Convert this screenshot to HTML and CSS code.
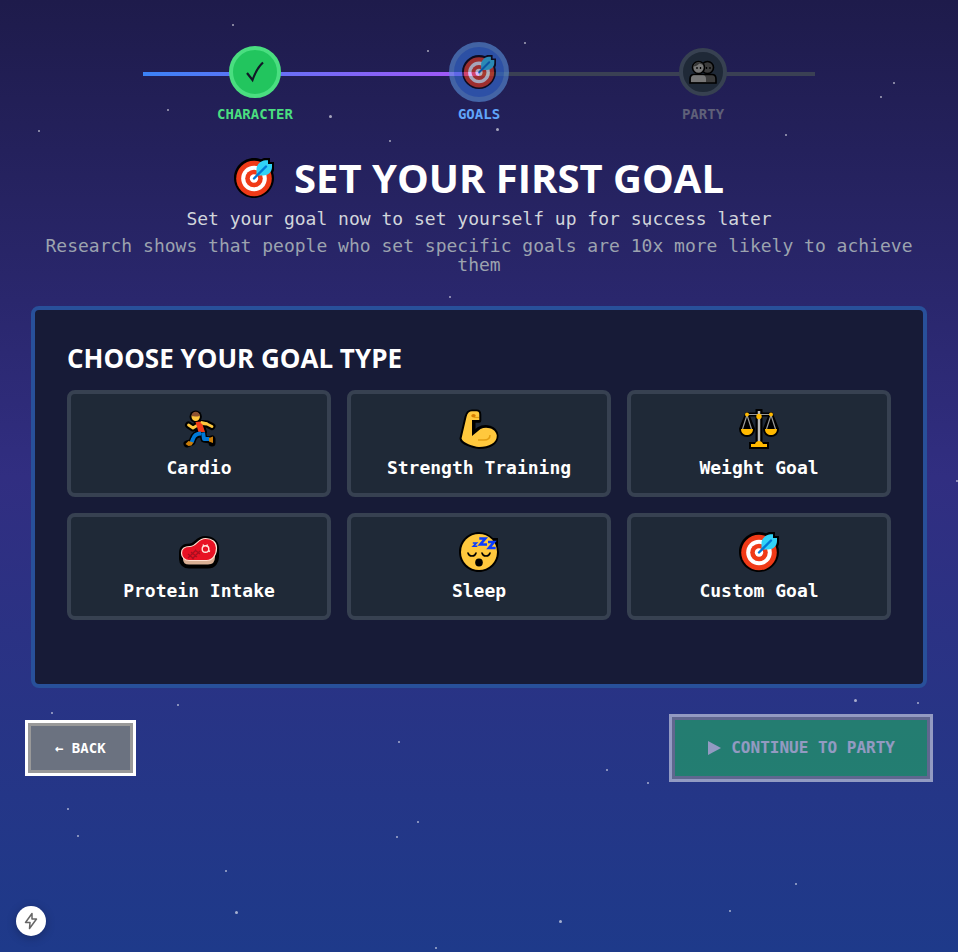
FILE: index.html
```html
<!DOCTYPE html>
<html lang="en">
<head>
<meta charset="utf-8">
<meta name="viewport" content="width=device-width, initial-scale=1">
<title>Set Your First Goal</title>
<link rel="stylesheet" href="styles.css">
</head>
<body>
<svg class="defs" width="0" height="0" aria-hidden="true">
  <symbol id="target" viewBox="0 0 40 40">
    <path d="M20 0C9 0 0 9 0 20s9 20 20 20 20-9 20-20c0-2-.3-4-.9-5.600L40 12V4h-4V0h-6l-3 1.200C25 .4 22.500 0 20 0Z" fill="#000"/>
    <circle cx="20" cy="20.500" r="17.800" fill="#f03a17"/>
    <circle cx="20" cy="20.500" r="12.800" fill="#fff"/>
    <circle cx="20" cy="20.500" r="8.800" fill="#f03a17"/>
    <circle cx="20" cy="20.500" r="4.200" fill="#fff"/>
    <path d="M22.500 17.500V11c0-4 4-8.500 9-8.800H34V6h4v3c0 5-4 8.500-9 8.500Z" fill="#31d2f7"/>
    <path d="m20 20.500 12-12" stroke="#0078d7" stroke-width="2.400" stroke-linecap="round"/>
  </symbol>
  <symbol id="runner" viewBox="0 0 40 40">
    <g fill="#000" stroke="#000" stroke-linecap="round" stroke-linejoin="round">
      <circle cx="16.700" cy="7.700" r="6.200" stroke="none"/>
      <path d="m9.500 16 4.500 3 4-2.500 5-2 5 .5 5 2.500" fill="none" stroke-width="7"/>
      <path d="m17 13 6 1 3 9-4 3-4-2Z" stroke-width="4"/>
      <path d="M21 25c-4 0-6 2-7 5l-1 3-5 2M24 25l1 5 6 1 2-1v4" fill="none" stroke-width="7"/>
    </g>
    <path d="m9.500 16 4.500 3 4-2.500M23 14.500l5 .5 5 2.500" fill="none" stroke="#ffc83d" stroke-width="2.800" stroke-linecap="round" stroke-linejoin="round"/>
    <path d="m16.500 13 6-.5 3.500 10.500h-6.500Z" fill="#f03a17"/>
    <path d="M23 13.500l4.500 1" stroke="#ffc83d" stroke-width="2.800" stroke-linecap="round"/>
    <circle cx="16.700" cy="7.700" r="4.200" fill="#ffc83d"/>
    <path d="M12.500 7a4.200 4.200 0 0 1 8.400 0c-1 .6-6 .6-8.400 0Z" fill="#8d5230"/>
    <path d="M22 24.500c-5 0-7 2-8 5.500l-1.500 3.500M24 23.500l1 6.500h5.500" fill="none" stroke="#0078d7" stroke-width="4" stroke-linejoin="round"/>
    <path d="m6.500 35 3-3 5 1.500-2 3-3 .5ZM30 29l4-1.500V34l-4-1.500Z" fill="#ca7d0a"/>
  </symbol>
  <symbol id="muscle" viewBox="0 0 40 40">
    <path d="M2.500 29.500 7.500 8C8.500 4 10.500 2.500 13 2.500h4.500c2 0 2.800 1.200 2.800 3v6.200H14.500V24l5-4c7-4 17-1.500 18 6.500C38 34 30 38 20 38 14 37.500 3 34 2.500 29.500Z" fill="#000" stroke="#000" stroke-width="4" stroke-linejoin="round"/>
    <path d="M2.500 29.500 7.500 8C8.500 4 10.500 2.300 13 2.300h4.500c2 0 2.800 1.200 2.800 3v5.700H13V27l8.500-7c6-3 15.500-.5 16.300 6.500C38 34 30 38 20 38 14 37.500 4 34 2.500 29.500Z" fill="#ffc83d"/>
    <path d="M19 31h6c4 0 6-2 6-5" fill="none" stroke="#e39d10" stroke-width="1.500"/>
    <ellipse cx="14.500" cy="6.700" rx="2.200" ry="1.800" fill="#d67d00"/>
    <path d="M15 8.500h5" stroke="#e39d10" stroke-width="1.200"/>
  </symbol>
  <symbol id="scales" viewBox="0 0 40 40">
    <g fill="#000" stroke="#000" stroke-width="4" stroke-linejoin="round">
      <path d="M8 5 2 20c0 4 3 6 6 6s6-2 6-6ZM32 5l-6 15c0 4 3 6 6 6s6-2 6-6Z"/>
      <path d="M8 5.500h24"/>
    </g>
    <path d="M16.500 0h7v33h6.500v7H10v-7h6.500Z" fill="#000"/>
    <path d="m8 6-4.500 14M8 6l4.500 14M32 6l-4.500 14M32 6l4.500 14M8 5.500h24" fill="none" stroke="#999" stroke-width="1.200"/>
    <path d="M20 2v32" stroke="#bbb" stroke-width="2.500"/>
    <path d="M2 20h12c0 4-3 6-6 6s-6-2-6-6ZM26 20h12c0 4-3 6-6 6s-6-2-6-6ZM12 35h4c1-4 7-4 8 0h4v3H12Z" fill="#ffb900"/>
    <circle cx="20" cy="7.500" r="2.700" fill="#ffb900"/>
    <circle cx="8" cy="5.500" r="2" fill="#ffb900"/>
    <circle cx="32" cy="5.500" r="2" fill="#ffb900"/>
  </symbol>
  <symbol id="meat" viewBox="0 0 40 40">
    <path d="M2 21c0-5 3-7.500 9-7.500 5 0 7-7.500 15-7.500 7 0 12 4 12 10v9c0 5-3 9.500-9 9.500H10c-5 0-8-3.500-8-7.500Z" fill="#d9af94" stroke="#000" stroke-width="4" stroke-linejoin="round"/>
    <path d="M2.500 21c0-4 3-6.500 8.500-6.500 6 0 8-8 15.500-8 6.500 0 11 3.500 11 9.500 0 7-4 12.500-10 12.500H10c-4 0-7.500-3-7.500-7.500Z" fill="#e81224" stroke="#ffe0d0" stroke-width="1.200"/>
    <path d="m9 22 6 5M12 20l6 5M16 18l5 4M9 26l8-8M13 27l8-8" stroke="#a80f20" stroke-width="1.200"/>
    <circle cx="26.500" cy="17" r="3.300" fill="none" stroke="#ffe4dc" stroke-width="1.400"/>
    <path d="m24 12.500 1 2M29 18.500l2 1M28.500 12.500l-1 2" stroke="#ffe4dc" stroke-width="1.400"/>
  </symbol>
  <symbol id="sleep" viewBox="0 0 40 40">
    <path d="M20 0C9 0 0 9 0 20s9 20 20 20 20-9 20-20l-1-5V6h-5C30 2 25 0 20 0Z" fill="#000"/>
    <circle cx="20" cy="20" r="18" fill="#ffc83d"/>
    <path d="M9 21c1 4 7 4 8 0M23 21c1 4 7 4 8 0" fill="none" stroke="#000" stroke-width="1.600" stroke-linecap="round"/>
    <ellipse cx="20" cy="30.500" rx="3.800" ry="3.900" fill="#000"/>
    <path d="M13.800 11h3.700l-3.200 3.200h4" fill="none" stroke="#0a3cff" stroke-width="1.600"/>
    <path d="M20.300 6.500h6l-5 6H28M29 10h6l-5 6h6.700" fill="none" stroke="#0a3cff" stroke-width="2.600"/>
  </symbol>
  <symbol id="people" viewBox="0 0 28 24">
    <circle cx="18.500" cy="7.500" r="6" fill="#3c3c3c" stroke="#000" stroke-width="1.600"/>
    <circle cx="9.500" cy="7.500" r="6" fill="#767676" stroke="#000" stroke-width="1.600"/>
    <path d="M4.500 6.500C5 1 13 1 14.500 5l-4-1.500c-2 2-4 3-6 3Z" fill="#383838"/>
    <path d="M1 23v-4c0-3 2-4.500 4-4.500h18c2 0 4 1.500 4 4.500v4Z" fill="#3c3c3c" stroke="#000" stroke-width="1.600"/>
    <path d="M2 22v-3c0-2.500 1.500-3.700 3-3.700h9c2 0 3 1.700 3 3.700v3Z" fill="#767676"/>
    <path d="M8 7v2M11.500 7v2M17.500 7v2M21 7v2" stroke="#000" stroke-width="1.300"/>
  </symbol>
</svg>

<svg class="stars" width="100%" height="100%" aria-hidden="true">
  <g fill="#fff" opacity=".6">
    <circle cx="233" cy="25" r="1"/><circle cx="428" cy="51" r="1"/><circle cx="525" cy="43" r="1"/>
    <circle cx="168" cy="110" r="1"/><circle cx="330.500" cy="116.500" r="1.500"/><circle cx="39" cy="131" r="1"/>
    <circle cx="390" cy="141" r="1"/><circle cx="497.500" cy="129.500" r="1.500"/><circle cx="786" cy="135" r="1"/>
    <circle cx="894" cy="83" r="1"/><circle cx="881" cy="97" r="1"/><circle cx="647" cy="226" r="1"/>
    <circle cx="450" cy="297" r="1"/><circle cx="957" cy="481" r="1"/><circle cx="52" cy="713" r="1"/>
    <circle cx="178" cy="705" r="1"/><circle cx="855.500" cy="700.500" r="1.500"/><circle cx="918" cy="703" r="1"/>
    <circle cx="399" cy="742" r="1"/><circle cx="607" cy="770" r="1"/><circle cx="648" cy="783" r="1"/>
    <circle cx="68" cy="809" r="1"/><circle cx="78" cy="836" r="1"/><circle cx="397" cy="837" r="1"/>
    <circle cx="418" cy="822" r="1"/><circle cx="226" cy="871" r="1"/><circle cx="236.500" cy="912.500" r="1.500"/>
    <circle cx="560.500" cy="921.500" r="1.500"/><circle cx="730" cy="911" r="1"/><circle cx="796" cy="884" r="1"/>
    <circle cx="436" cy="948" r="1"/>
  </g>
</svg>

<main class="page">
  <ol class="steps">
    <li class="step done">
      <span class="slot"><span class="dot"><svg width="20" height="22" viewBox="0 0 20 22" aria-hidden="true"><path d="M2 12 7.500 19C10 12 13 6 18 1.500" fill="none" stroke="#111827" stroke-width="2.200"/></svg></span></span>
      <span class="step-name">CHARACTER</span>
    </li>
    <li class="step current" aria-current="step">
      <span class="slot"><span class="dot"><svg width="34" height="34" aria-hidden="true"><use href="#target"/></svg></span></span>
      <span class="step-name">GOALS</span>
    </li>
    <li class="step todo">
      <span class="slot"><span class="dot"><svg width="28" height="24" aria-hidden="true"><use href="#people"/></svg></span></span>
      <span class="step-name">PARTY</span>
    </li>
  </ol>

  <header class="intro">
    <h1><svg class="icon" aria-hidden="true"><use href="#target"/></svg>SET YOUR FIRST GOAL</h1>
    <p class="lead">Set your goal now to set yourself up for success later</p>
    <p class="note">Research shows that people who set specific goals are 10x more likely to achieve them</p>
  </header>

  <section class="panel">
    <h2>CHOOSE YOUR GOAL TYPE</h2>
    <div class="cards">
      <button class="card" type="button"><svg class="icon" aria-hidden="true"><use href="#runner"/></svg>Cardio</button>
      <button class="card" type="button"><svg class="icon" aria-hidden="true"><use href="#muscle"/></svg>Strength Training</button>
      <button class="card" type="button"><svg class="icon" aria-hidden="true"><use href="#scales"/></svg>Weight Goal</button>
      <button class="card" type="button"><svg class="icon" aria-hidden="true"><use href="#meat"/></svg>Protein Intake</button>
      <button class="card" type="button"><svg class="icon" aria-hidden="true"><use href="#sleep"/></svg>Sleep</button>
      <button class="card" type="button"><svg class="icon" aria-hidden="true"><use href="#target"/></svg>Custom Goal</button>
    </div>
  </section>

  <nav class="actions">
    <button class="btn back" type="button">← BACK</button>
    <button class="btn next" type="button" disabled><svg width="14" height="14" viewBox="0 0 14 14" aria-hidden="true"><path d="M1 0v14l13-7Z" fill="currentColor"/></svg>CONTINUE TO PARTY</button>
  </nav>
</main>

<button class="quick" type="button" aria-label="Quick actions">
  <svg width="16" height="18" viewBox="0 0 16 18" aria-hidden="true"><path d="M9 1.500 2.500 10.500H7L6.500 16.500 13.500 7H9Z" fill="none" stroke="#666" stroke-width="1.500" stroke-linejoin="round"/></svg>
</button>
</body>
</html>
```
FILE: styles.css
```css
* {
  box-sizing: border-box;
}

body {
  margin: 0;
  min-height: 100vh;
  color: #fff;
  font-family: "DejaVu Sans Mono", monospace;
  background: linear-gradient(to bottom, #1e1b4b, #312e81 50%, #1e3a8a) no-repeat;
}

h1, h2, p, ol {
  margin: 0;
  padding: 0;
}

button {
  font: inherit;
  color: inherit;
  border: 0;
}

.defs, .stars {
  position: absolute;
  top: 0;
  left: 0;
  pointer-events: none;
}

.page {
  position: relative;
  max-width: 896px;
  margin: 0 auto;
  padding-top: 42px;
}

.steps {
  display: flex;
  max-width: 672px;
  margin: 0 auto;
  list-style: none;
  background:
    linear-gradient(to right, #3b82f6, #a855f7) 0 30px / 50% 4px no-repeat,
    linear-gradient(#3a4054, #3a4054) 0 30px / 100% 4px no-repeat;
}

.step {
  flex: 1;
  display: flex;
  flex-direction: column;
  align-items: center;
}

.slot {
  display: flex;
  align-items: center;
  height: 60px;
}

.dot {
  display: flex;
  align-items: center;
  justify-content: center;
  width: 48px;
  height: 48px;
  border: 4px solid #374151;
  border-radius: 50%;
  background: #1f2937;
}

.done .dot {
  width: 52px;
  height: 52px;
  background: #22c55e;
  border-color: #4ade80;
}

.current .dot {
  width: 60px;
  height: 60px;
  border-width: 5px;
  background: #3572dc;
  border-color: #5a92dc;
  opacity: .6;
}

.step-name {
  margin-top: 4px;
  font-size: 14px;
  font-weight: 700;
  line-height: 16px;
  color: #5f6079;
}

.done .step-name {
  color: #4ade80;
}

.current .step-name {
  color: #60a5fa;
}

.intro {
  margin-top: 32px;
  text-align: center;
}

.icon {
  width: 40px;
  height: 40px;
}

h1, h2 {
  font-family: "Comic Sans MS", "Open Sans", sans-serif;
  font-weight: 700;
}

h1 {
  display: flex;
  align-items: center;
  justify-content: center;
  gap: 20px;
  font-size: 40px;
  line-height: 48px;
}

.lead, .note {
  font-size: 18px;
  line-height: 19px;
}

.lead {
  margin-top: 7px;
  color: #d1d5db;
}

.note {
  margin-top: 8px;
  color: #9ca3af;
}

.panel {
  margin-top: 32px;
  padding: 32px 32px 64px;
  border: 4px solid #28509a;
  border-radius: 8px;
  background: #171b37;
}

h2 {
  font-size: 26px;
  line-height: 32px;
}

.cards {
  display: grid;
  grid-template-columns: repeat(3, 1fr);
  gap: 16px;
  margin-top: 16px;
}

.card {
  display: flex;
  flex-direction: column;
  align-items: center;
  gap: 8px;
  padding: 15px 16px;
  border: 4px solid #374151;
  border-radius: 8px;
  background: #1f2937;
  font-size: 18px;
  font-weight: 700;
  line-height: 21px;
}

.actions {
  display: flex;
  align-items: center;
  justify-content: space-between;
  margin-top: 32px;
}

.btn {
  display: flex;
  align-items: center;
  gap: 10px;
  font-weight: 700;
  box-shadow: 0 0 0 3px #999, 0 0 0 6px #fff;
}

.back {
  padding: 14px 24px;
  background: #6b7280;
  font-size: 14px;
  line-height: 16px;
}

.next {
  padding: 18px 32px;
  background: #22c55e;
  font-size: 16px;
  line-height: 20px;
  opacity: .5;
}

.quick {
  position: fixed;
  left: 16px;
  bottom: 16px;
  display: flex;
  align-items: center;
  justify-content: center;
  width: 30px;
  height: 30px;
  padding: 0;
  border-radius: 50%;
  background: #fff;
  box-shadow: 0 2px 10px rgba(0, 0, 0, .25);
}
```
